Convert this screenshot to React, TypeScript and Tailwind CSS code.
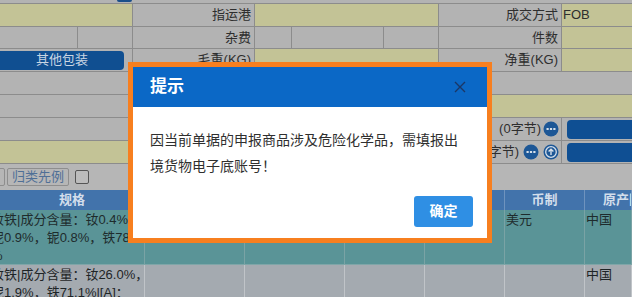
import * as React from 'react';

const font = { fontFamily: '"Liberation Sans", "Noto Sans CJK SC", sans-serif' };

const olive = 'bg-[#c3c396]';
const gray = 'bg-[#b3b3b3]';
const line = 'border-[#8c8c8c]';

function Label({ text, w }: { text: string; w: string }) {
  return (
    <div className={`${w} h-full ${gray} border-r ${line} flex items-center justify-end pr-[3px] text-[13px] text-[#2e2e2e]`}>
      {text}
    </div>
  );
}

function Cell({ w, bg, children }: { w: string; bg: string; children?: React.ReactNode }) {
  return <div className={`${w} h-full ${bg} border-r ${line} flex items-center text-[13px] text-[#2e2e2e]`}>{children}</div>;
}

function DotsIcon() {
  return (
    <svg width="16" height="16" viewBox="0 0 16 16">
      <circle cx="8" cy="8" r="7.5" fill="#1d5796" />
      <rect x="3.5" y="7" width="2.2" height="2" fill="#d7e0ea" />
      <rect x="6.9" y="7" width="2.2" height="2" fill="#d7e0ea" />
      <rect x="10.3" y="7" width="2.2" height="2" fill="#d7e0ea" />
    </svg>
  );
}

function UpIcon() {
  return (
    <svg width="16" height="16" viewBox="0 0 16 16">
      <circle cx="8" cy="8" r="7.5" fill="#1d5796" />
      <circle cx="8" cy="8" r="5.3" fill="none" stroke="#d7e0ea" strokeWidth="1.3" />
      <path d="M8 11V5.2M5.6 7.6L8 5.2l2.4 2.4" fill="none" stroke="#d7e0ea" strokeWidth="1.4" />
    </svg>
  );
}

const cols = ['w-[145px]', 'w-[100px]', 'w-[100px]', 'w-[80px]', 'w-[80px]', 'w-[80px]', 'flex-1'];

export default function App() {
  return (
    <div className="relative w-[632px] h-[297px] overflow-hidden bg-[#b3b3b3]" style={font}>
      {/* top strip */}
      <div className={`h-[4px] flex border-b ${line}`}>
        <div className="w-[117px]" />
        <div className="w-[15px] h-[2px] bg-[#1a4f8a] rounded-b-[2px]" />
      </div>

      {/* row A */}
      <div className={`h-[23px] flex border-b ${line}`}>
        <Cell w="w-[133px]" bg={olive} />
        <Label text="指运港" w="w-[122px]" />
        <Cell w="w-[184px]" bg={olive} />
        <Label text="成交方式" w="w-[123px]" />
        <div className={`flex-1 h-full ${olive} flex items-center pl-[1px] text-[13px] text-[#2e2e2e]`}>FOB</div>
      </div>

      {/* row B */}
      <div className={`h-[22px] flex border-b ${line}`}>
        <Cell w="w-[78px]" bg={gray} />
        <Cell w="w-[55px]" bg={gray} />
        <Label text="杂费" w="w-[122px]" />
        <Cell w="w-[37px]" bg={gray} />
        <Cell w="w-[92px]" bg={gray} />
        <Cell w="w-[55px]" bg={gray} />
        <Label text="件数" w="w-[123px]" />
        <div className={`flex-1 h-full ${olive}`} />
      </div>

      {/* row C */}
      <div className={`h-[23px] flex border-b ${line}`}>
        <div className={`w-[133px] h-full ${gray} border-r ${line} flex items-center`}>
          <div className="w-[124px] h-[19px] bg-[#104f91] rounded-r-[4px] flex items-center justify-center text-[13px] text-[#c9d5e3]">
            其他包装
          </div>
        </div>
        <Label text="毛重(KG)" w="w-[122px]" />
        <Cell w="w-[184px]" bg={olive} />
        <Label text="净重(KG)" w="w-[123px]" />
        <div className={`flex-1 h-full ${olive}`} />
      </div>

      {/* row D */}
      <div className={`h-[23px] border-b ${line} ${gray}`} />

      {/* row E */}
      <div className={`h-[23px] flex border-b ${line}`}>
        <div className={`w-[255px] h-full ${gray}`} />
        <div className={`flex-1 h-full ${olive}`} />
      </div>

      {/* row F */}
      <div className={`h-[23px] flex border-b ${line}`}>
        <div className={`w-[562px] h-full ${gray} border-r ${line} flex items-center justify-end gap-[2px] pr-[2px] text-[13px] text-[#2e2e2e]`}>
          <span>(0字节)</span>
          <DotsIcon />
        </div>
        <div className="flex-1 h-full flex items-center pl-[5px]">
          <div className="w-full h-[19px] bg-[#0f4f93] rounded-l-[4px]" />
        </div>
      </div>

      {/* row G */}
      <div className={`h-[23px] flex border-b ${line}`}>
        <div className={`w-[255px] h-full ${olive}`} />
        <div className={`flex-1 h-full ${gray} border-r ${line} flex items-center justify-end gap-[4px] pr-[2px] text-[13px] text-[#2e2e2e]`}>
          <span>(3字节)</span>
          <div className="flex gap-[4px]">
            <DotsIcon />
            <UpIcon />
          </div>
        </div>
        <div className="w-[70px] h-full flex items-center pl-[5px]">
          <div className="w-full h-[19px] bg-[#0f4f93] rounded-l-[4px]" />
        </div>
      </div>

      {/* toolbar */}
      <div className="h-[26px] flex items-center bg-[#b6b6b6]">
        <div className="ml-[-31px] h-[18px] px-[4px] border border-[#8e8e8e] rounded-[2px] text-[13px] leading-[16px] text-[#4f6f96] whitespace-nowrap">
          上是
        </div>
        <div className="ml-[2px] h-[18px] px-[4px] border border-[#8e8e8e] rounded-[2px] text-[13px] leading-[16px] text-[#4f6f96] whitespace-nowrap">
          归类先例
        </div>
        <div className="ml-[6px] w-[14px] h-[14px] border border-[#555] rounded-[2px] bg-[#bcbcbc]" />
      </div>

      {/* table header */}
      <div className="h-[20px] flex bg-[#4273ab] text-[13px] font-bold text-[#d3deeb]">
        {cols.map((c, i) => (
          <div
            key={i}
            className={`${c} h-full border-r border-[#6e93be] flex items-center whitespace-nowrap overflow-hidden ${i === 6 ? 'justify-start pl-[18px]' : 'justify-center'}`}
          >
            {i === 0 ? '规格' : i === 5 ? '币制' : i === 6 ? '原产国' : ''}
          </div>
        ))}
      </div>

      {/* teal row */}
      <div className="h-[55px] flex bg-[#5a9497] border-b border-[#7fa6a8] text-[13px] leading-[18px] text-[#1e2b2c]">
        {cols.map((c, i) => (
          <div key={i} className={`${c} h-full border-r border-[#7aa3a5] pt-[1px] overflow-hidden`}>
            {i === 0 && (
              <div className="ml-[-9px] whitespace-nowrap">
                <div>钕铁|成分含量：钕0.4%，</div>
                <div>铌0.9%，铌0.8%，铁78.0</div>
                <div>%</div>
              </div>
            )}
            {i === 5 && <div className="pl-[1px]">美元</div>}
            {i === 6 && <div className="pl-[1px]">中国</div>}
          </div>
        ))}
      </div>

      {/* gray row */}
      <div className="h-[40px] flex bg-[#a4aab0] text-[13px] leading-[18px] text-[#1e2426]">
        {cols.map((c, i) => (
          <div key={i} className={`${c} h-full border-r border-[#c0c4c8] pt-[1px] overflow-hidden`}>
            {i === 0 && (
              <div className="ml-[-9px] whitespace-nowrap">
                <div>钕铁|成分含量：钕26.0%，</div>
                <div>铌1.9%，铁71.1%|[A]：</div>
              </div>
            )}
            {i === 6 && <div className="pl-[1px]">中国</div>}
          </div>
        ))}
      </div>

      {/* dialog */}
      <div className="absolute left-[128px] top-[62px] w-[364px] h-[181px] border-[5px] border-[#f77f1f] bg-white flex flex-col">
        <div className="h-[40px] bg-[#0b68c6] flex items-center justify-between pl-[17px] pr-[21px]">
          <span className="text-[17px] font-bold text-white">提示</span>
          <svg width="12" height="12" viewBox="0 0 12 12">
            <path d="M1 1L11 11M11 1L1 11" stroke="#1b3766" strokeWidth="1.4" />
          </svg>
        </div>
        <div className="pl-[17px] pr-[12px] pt-[20px] text-[14px] leading-[26px] text-[#2f2f2f]">
          <div>因当前单据的申报商品涉及危险化学品，需填报出</div>
          <div>境货物电子底账号！</div>
        </div>
        <div className="flex justify-end pr-[14px] mt-[17px]">
          <button className="w-[59px] h-[31px] bg-[#2f8fe4] rounded-[3px] text-[14px] font-bold text-white">确定</button>
        </div>
      </div>
    </div>
  );
}
